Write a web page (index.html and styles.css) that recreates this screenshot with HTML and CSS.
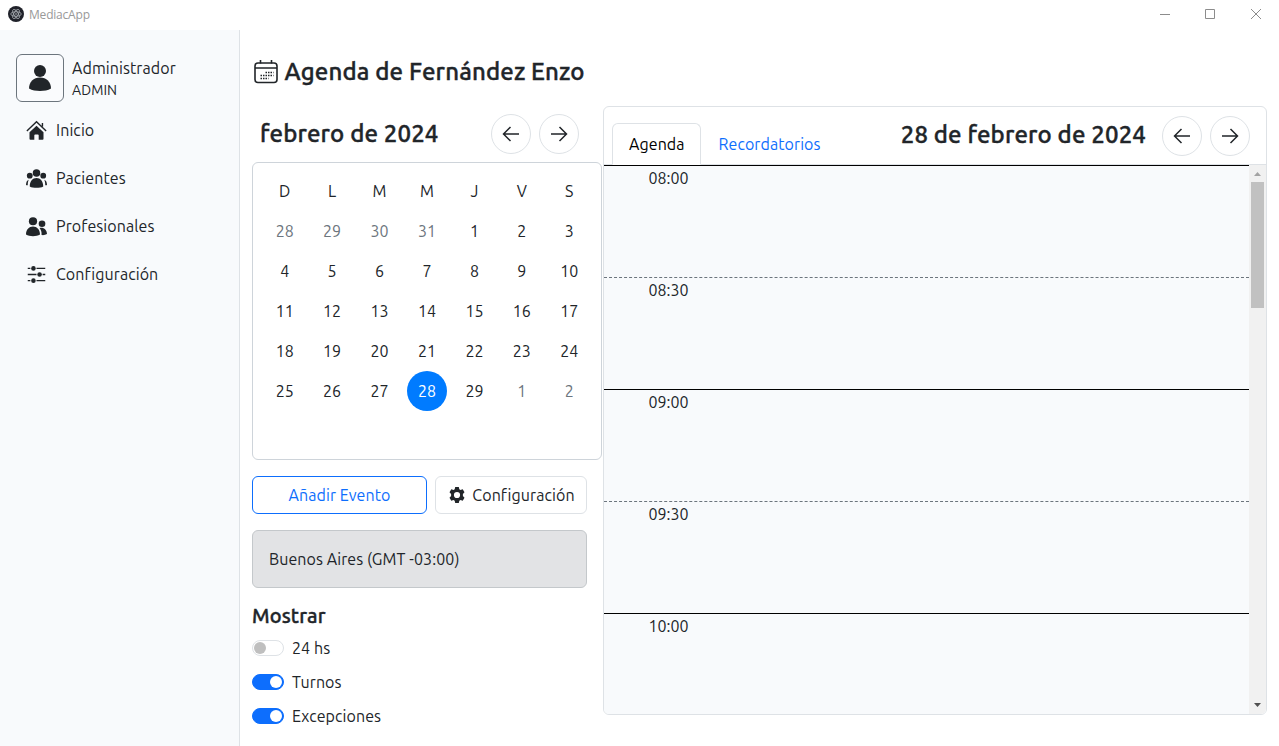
FILE: index.html
```html
<!DOCTYPE html>
<html lang="es">
<head>
<meta charset="utf-8">
<title>MediacApp</title>
<link rel="stylesheet" href="styles.css">
</head>
<body>
<svg class="defs" aria-hidden="true">
  <symbol id="arrow-left" viewBox="0 0 24 24"><path d="M20 12H4.500M11.500 5l-7 7 7 7"/></symbol>
  <symbol id="arrow-right" viewBox="0 0 24 24"><path d="M4 12h15.500M12.500 5l7 7-7 7"/></symbol>
</svg>
<header class="titlebar">
  <svg class="app-icon" viewBox="0 0 16 16"><circle cx="8" cy="8" r="8" fill="#20222a"/><g fill="none" stroke="#b9bec4" stroke-width=".7"><ellipse cx="8" cy="8" rx="5.200" ry="2.200"/><ellipse cx="8" cy="8" rx="5.200" ry="2.200" transform="rotate(60 8 8)"/><ellipse cx="8" cy="8" rx="5.200" ry="2.200" transform="rotate(120 8 8)"/></g><circle cx="8" cy="8" r=".8" fill="#b9bec4"/></svg>
  <span class="app-name">MediacApp</span>
  <div class="window-controls">
    <svg viewBox="0 0 10 10"><path d="M0 5.500h10"/></svg>
    <svg viewBox="0 0 10 10"><path d="M.5.5h9v9h-9z"/></svg>
    <svg viewBox="0 0 10 10"><path d="M0 0l10 10M10 0 0 10"/></svg>
  </div>
</header>
<div class="shell">
  <aside class="sidebar">
    <div class="user">
      <div class="avatar"><svg viewBox="0 0 32 32"><circle cx="16" cy="8" r="6"/><path d="M5 25.500C5 19 9.500 14.500 16 14.500S27 19 27 25.500C24 27.300 20 28 16 28S8 27.300 5 25.500Z"/></svg></div>
      <div><div class="user-name">Administrador</div><div class="user-role">ADMIN</div></div>
    </div>
    <nav class="nav">
      <a><svg viewBox="0 0 24 24"><path d="M12 6.500 20 14v7.500a1 1 0 0 1-1 1h-4.500V17.500q0-1-1-1h-3q-1 0-1 1v5H5a1 1 0 0 1-1-1V14z"/><path class="line" d="M1 12.500 12 2l11 10.500M18.800 3.500v4"/></svg><span>Inicio</span></a>
      <a><svg viewBox="0 0 24 24"><circle cx="12" cy="5.700" r="4.300"/><circle cx="4.300" cy="8.800" r="3.300"/><circle cx="19.700" cy="8.800" r="3.300"/><path d="M4.300 21C4.300 15.500 7.500 11.500 12 11.500s7.700 4 7.700 9.500c-3.500 2.200-11.900 2.200-15.400 0ZM0 19.300c0-3 1-5.300 3.200-6-.8 1.500-1.200 3.600-1.200 6.300-.7.200-1.400.2-2-.3ZM24 19.300c0-3-1-5.300-3.200-6 .8 1.500 1.200 3.600 1.200 6.300.7.200 1.400.2 2-.3Z"/></svg><span>Pacientes</span></a>
      <a><svg viewBox="0 0 24 24"><circle cx="8" cy="6" r="4.700"/><circle cx="18.300" cy="8.800" r="3.800"/><path d="M0 21.200C0 15.500 3.500 12 8 12s8 3.500 8 9.200c-4 2.500-12 2.500-16 0ZM17.800 21.800c.2-3.500-.6-6-2.300-8 4.500-1.300 8.400 1.800 8.500 6.900-1.700 1-3.900 1.400-6.200 1.100Z"/></svg><span>Profesionales</span></a>
      <a><svg viewBox="0 0 24 24"><path class="line thin" d="M2 5h3M12 5h10M2 12h10M19 12h3M2 19h3M12 19h10"/><circle cx="8.500" cy="5" r="2.600"/><circle cx="15.500" cy="12" r="2.600"/><circle cx="8.500" cy="19" r="2.600"/></svg><span>Configuración</span></a>
    </nav>
  </aside>
  <main class="main">
    <h1 class="page-title"><svg viewBox="0 0 24 24"><rect x="1" y="3" width="22" height="19.500" rx="3"/><path d="M1 8h22M6.500 0v3.500M17.500 0v3.500"/><path class="dots" d="M11.500 12.500h8M6.500 15.500h13M6.500 18.500h8"/></svg><span>Agenda de Fernández Enzo</span></h1>
    <div class="columns">
      <section class="left">
        <div class="month-bar"><h2 class="month">febrero de 2024</h2>
          <button class="round"><svg><use href="#arrow-left"/></svg></button><button class="round"><svg><use href="#arrow-right"/></svg></button></div>
        <div class="calendar">
          <span>D</span><span>L</span><span>M</span><span>M</span><span>J</span><span>V</span><span>S</span>
          <span class="out">28</span><span class="out">29</span><span class="out">30</span><span class="out">31</span><span>1</span><span>2</span><span>3</span>
          <span>4</span><span>5</span><span>6</span><span>7</span><span>8</span><span>9</span><span>10</span>
          <span>11</span><span>12</span><span>13</span><span>14</span><span>15</span><span>16</span><span>17</span>
          <span>18</span><span>19</span><span>20</span><span>21</span><span>22</span><span>23</span><span>24</span>
          <span>25</span><span>26</span><span>27</span><span class="today">28</span><span>29</span><span class="out">1</span><span class="out">2</span>
        </div>
        <div class="actions">
          <button class="btn primary">Añadir Evento</button>
          <button class="btn config"><svg viewBox="0 0 16 16"><path fill-rule="evenodd" d="M6.200 0h3.600l.5 2.200 1.200.7 2.200-.7 1.800 3.100L13.900 6.900v2.200l1.600 1.600-1.800 3.100-2.200-.7-1.200.7L9.800 16H6.200l-.5-2.200-1.200-.7-2.200.7L.5 10.700 2.100 9.100V6.900L.5 5.300l1.800-3.100 2.200.7 1.200-.7ZM8 4.900a3.100 3.100 0 1 0 0 6.200 3.100 3.100 0 0 0 0-6.200Z"/></svg><span>Configuración</span></button>
        </div>
        <div class="timezone">Buenos Aires (GMT -03:00)</div>
        <h3 class="show-title">Mostrar</h3>
        <label class="option"><i class="switch"></i><span>24 hs</span></label>
        <label class="option"><i class="switch on"></i><span>Turnos</span></label>
        <label class="option"><i class="switch on"></i><span>Excepciones</span></label>
      </section>
      <section class="card">
        <div class="card-head">
          <div class="tabs"><a class="tab active">Agenda</a><a class="tab">Recordatorios</a></div>
          <div class="day-bar"><h2 class="day">28 de febrero de 2024</h2>
            <button class="round"><svg><use href="#arrow-left"/></svg></button><button class="round"><svg><use href="#arrow-right"/></svg></button></div>
        </div>
        <div class="card-body">
          <div class="slots">
            <div class="slot">08:00</div><div class="slot half">08:30</div><div class="slot">09:00</div><div class="slot half">09:30</div><div class="slot">10:00</div>
          </div>
          <div class="scrollbar"><svg viewBox="0 0 17 17"><path fill="#a3a3a3" d="M5 11h7L8.500 7z"/></svg><div class="thumb"></div><svg class="down" viewBox="0 0 17 17"><path fill="#505050" d="M5 6h7l-3.500 4z"/></svg></div>
        </div>
      </section>
    </div>
  </main>
</div>
</body>
</html>
```
FILE: styles.css
```css
* { box-sizing: border-box; }
body { margin: 0; height: 746px; overflow: hidden; background: #fff; color: #212529; font: 16px/24px Ubuntu, "Noto Sans", sans-serif; letter-spacing: .08px; }
h1, h2, h3 { margin: 0; font-weight: 500; letter-spacing: .14px; -webkit-text-stroke: .4px #212529; }
button { font: inherit; letter-spacing: inherit; color: inherit; background: #fff; padding: 0; }
.defs { display: none; }
.titlebar { height: 30px; display: flex; align-items: center; padding: 0 18px 2px 8px; }
.app-icon { width: 16px; height: 16px; }
.app-name { margin: 2px 0 0 5px; font: 12px/24px "Open Sans", sans-serif; letter-spacing: -.2px; color: #999; }
.window-controls { margin-left: auto; display: flex; gap: 36px; }
.window-controls svg { width: 10px; height: 10px; fill: none; stroke: #8c8c8c; overflow: visible; }
.window-controls svg:nth-child(2) { margin-left: -1px; }
.shell { display: flex; height: 716px; }
.sidebar { width: 240px; background: #f8fafc; border-right: 1px solid #dee2e6; padding: 24px 16px; }
.user { display: flex; gap: 8px; height: 48px; align-items: center; }
.avatar { width: 48px; height: 48px; border: 1px solid #6c757d; border-radius: 6px; background: #fafbfd; display: grid; place-items: center; }
.avatar svg { width: 32px; height: 32px; margin-top: 1px; fill: #212529; }
.user-name { line-height: 22px; padding-top: 1px; }
.user-role { font-size: 14px; line-height: 21px; padding-top: 1px; }
.nav { display: flex; flex-direction: column; gap: 8px; margin-top: 8px; padding-left: 9.500px; }
.nav a { display: flex; align-items: center; gap: 9.500px; height: 40px; }
.nav svg { width: 21px; height: 21px; fill: #212529; }
.nav .line { fill: none; stroke: #212529; stroke-width: 1.600; }
.nav .thin { stroke-width: 1.500; }
.main { flex: 1; padding: 24px 12px; }
.page-title { display: flex; align-items: center; gap: 6.500px; height: 36px; padding-left: 2px; font-size: 24px; }
.page-title svg { width: 24px; height: 24px; fill: none; stroke: #212529; stroke-width: 1.600; }
.page-title .dots { stroke-dasharray: 1.500 1; }
.columns { display: flex; gap: 16px; margin-top: 16px; }
.left { width: 335px; flex: none; padding-top: 8px; }
.month-bar { display: flex; align-items: center; gap: 8px; padding: 0 8px; height: 40px; }
.month { flex: 1; font-size: 24px; }
.round { width: 40px; height: 40px; border: 1px solid #dee2e6; border-radius: 50%; display: grid; place-items: center; }
.round svg { width: 24px; height: 24px; fill: none; stroke: #212529; stroke-width: 1.500; }
.calendar { width: 350px; height: 298px; margin-top: 8px; border: 1px solid #ced4da; border-radius: 6px; padding: 8px; display: grid; grid-template-columns: repeat(7, 1fr); grid-auto-rows: 40px; letter-spacing: 0; }
.calendar span { display: grid; place-items: center; }
.calendar .out { color: #6c757d; }
.calendar .today { width: 40px; justify-self: center; background: #007bff; color: #fff; border-radius: 50%; }
.actions { display: flex; gap: 8px; margin-top: 16px; }
.btn { width: 152px; height: 38px; border: 1px solid #dee2e6; border-radius: 6px; display: flex; align-items: center; justify-content: center; gap: 7px; }
.btn.primary { width: 175px; color: #0d6efd; border-color: #0d6efd; }
.btn.config { padding-left: 2px; }
.btn svg { width: 16px; height: 16px; fill: #212529; }
.timezone { height: 58px; margin-top: 16px; padding: 16px; background: #e2e3e5; border: 1px solid #c4c8cb; border-radius: 6px; }
.show-title { font-size: 20px; line-height: 24px; margin: 16px 0 8px; }
.option { display: flex; align-items: center; gap: 8px; height: 24px; margin-bottom: 10px; }
.switch { width: 32px; height: 16px; border: 1px solid #dee2e6; border-radius: 8px; padding: 1px; display: flex; }
.switch::before { content: ""; width: 12px; height: 12px; border-radius: 50%; background: #bfbfbf; }
.switch.on { background: #0d6efd; border-color: #0d6efd; justify-content: flex-end; }
.switch.on::before { background: #fff; }
.card { width: 664px; height: 609px; border: 1px solid #dee2e6; border-radius: 6px; overflow: hidden; }
.card-head { height: 58px; display: flex; justify-content: space-between; align-items: flex-end; border-bottom: 1px solid #dee2e6; padding: 0 16px 0 8px; }
.tabs { display: flex; margin-bottom: -1px; }
.tab { height: 42px; padding: 8px 16.500px; border: 1px solid transparent; color: #0d6efd; }
.tab.active { width: 89px; padding: 8px 16px; color: #000; background: #fff; border-color: #dee2e6 #dee2e6 #fff; border-radius: 6px 6px 0 0; }
.day-bar { display: flex; gap: 8px; align-items: center; margin-bottom: 8px; }
.day { font-size: 24px; margin: 0 8px 2px 0; }
.card-body { display: flex; height: 549px; background: #f8fafc; }
.slots { flex: 1; overflow: hidden; letter-spacing: 0; }
.slot { height: 112px; border-top: 1px solid #000; padding-left: 44.500px; }
.slot.half { border-top: 1px dashed #6c757d; }
.scrollbar { width: 17px; background: #f1f1f1; display: flex; flex-direction: column; }
.scrollbar svg { width: 17px; height: 17px; }
.scrollbar .down { margin-top: auto; }
.thumb { width: 13px; height: 126px; margin: 0 2px; background: #c1c1c1; }
```
